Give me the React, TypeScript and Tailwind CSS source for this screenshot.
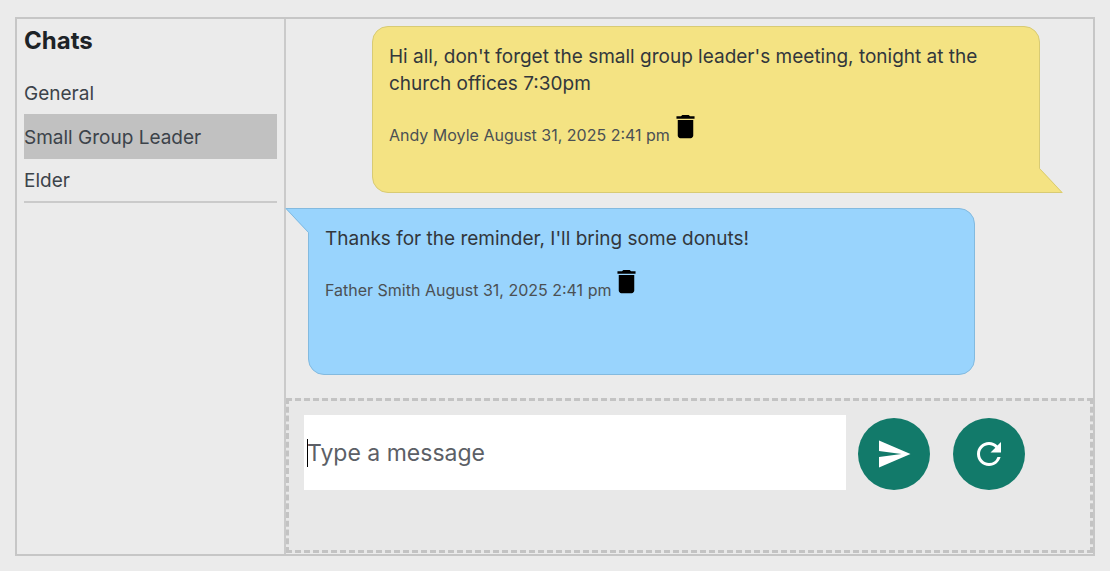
import React from 'react';
import clsx from 'clsx';
import { MdDelete, MdRefresh, MdSend } from 'react-icons/md';

interface Message {
  id: number;
  author: string;
  date: string;
  text: string;
  mine: boolean;
}

const chats = ['General', 'Small Group Leader', 'Elder'];

const messages: Message[] = [
  {
    id: 1,
    author: 'Andy Moyle',
    date: 'August 31, 2025 2:41 pm',
    text: "Hi all, don't forget the small group leader's meeting, tonight at the church offices 7:30pm",
    mine: true
  },
  {
    id: 2,
    author: 'Father Smith',
    date: 'August 31, 2025 2:41 pm',
    text: "Thanks for the reminder, I'll bring some donuts!",
    mine: false
  }
];

const ChatList: React.FC<{ active: string }> = ({ active }) => (
  <aside className="w-[269px] shrink-0 border-r-2 border-[#cacaca] px-[7px] pt-2">
    <h1 className="text-2xl leading-7 font-bold text-[#1d2327]">Chats</h1>
    <ul className="mt-[17px] border-b-2 border-[#cacaca] text-[19px] text-[#3c434a]">
      {chats.map(chat => (
        <li key={chat}>
          <button
            type="button"
            className={clsx(
              'block w-full pt-[3px] text-left',
              chat === active ? 'h-[45px] bg-[#c1c1c1]' : 'h-[42px]'
            )}
          >
            {chat}
          </button>
        </li>
      ))}
    </ul>
  </aside>
);

const Bubble: React.FC<{ message: Message }> = ({ message }) => (
  <article
    className={clsx(
      'relative h-[167px] rounded-2xl border px-4 pt-4 text-[#32373c]',
      message.mine
        ? 'ml-[86px] mr-[53px] rounded-br-none border-[#d8cb74] bg-[#f4e383]'
        : 'ml-[22px] mr-[118px] rounded-tl-none border-[#83badf] bg-[#99d4fd]'
    )}
  >
    {/* Speech tail */}
    {message.mine ? (
      <svg className="absolute -bottom-px left-full h-[26px] w-6" viewBox="0 0 24 26">
        <path d="M-1 26V1H0.5L24 26Z" fill="#f4e383" />
        <path d="M0.5 0V1.5L23 25.5H-1" fill="none" stroke="#d8cb74" />
      </svg>
    ) : (
      <svg className="absolute -top-px right-full h-[26px] w-6" viewBox="0 0 24 26">
        <path d="M25 0V25H23.5L0 0Z" fill="#99d4fd" />
        <path d="M23.5 26V24.5L1 0.5H25" fill="none" stroke="#83badf" />
      </svg>
    )}

    <p className="text-[19px] leading-[27px]">{message.text}</p>
    <div className="mt-[14px] flex items-start text-base text-[#4b5054]">
      <span className="pt-3">
        {message.author} {message.date}
      </span>
      <button type="button" aria-label="Delete message" className="text-black">
        <MdDelete size={31} />
      </button>
    </div>
  </article>
);

const Composer: React.FC = () => (
  <form
    className="mb-px flex h-[155px] items-start border-3 border-dashed border-[#c3c3c3] bg-[#e8e8e8] pt-[14px] pr-[65px] pl-[15px]"
    onSubmit={e => e.preventDefault()}
  >
    <div className="relative mr-3 min-w-0 flex-1">
      <input
        type="text"
        aria-label="Message"
        placeholder="Type a message"
        className="block h-[75px] w-full bg-white px-[3px] text-[23px] text-[#3c434a] caret-transparent outline-none placeholder:text-[#5c5f66]"
      />
      {/* Text cursor */}
      <span className="absolute top-6 left-[3px] h-7 w-px bg-black" />
    </div>
    <div className="mt-[3px] flex gap-[23px] text-white">
      <button
        type="button"
        aria-label="Send"
        className="flex size-[72px] items-center justify-center rounded-full bg-[#127a6a]"
      >
        <MdSend size={36} />
      </button>
      <button
        type="button"
        aria-label="Refresh"
        className="flex size-[72px] items-center justify-center rounded-full bg-[#127a6a]"
      >
        <MdRefresh size={36} />
      </button>
    </div>
  </form>
);

const App: React.FC = () => {
  return (
    <div className="min-h-screen bg-[#ebebeb] px-[15px] py-[17px] font-['Inter',sans-serif]">
      <div className="flex border-2 border-[#c6c6c6]">
        <ChatList active="Small Group Leader" />
        <main className="min-w-0 flex-1">
          <div className="flex flex-col gap-[15px] pt-[7px] pb-[23px]">
            {messages.map(message => (
              <Bubble key={message.id} message={message} />
            ))}
          </div>
          <Composer />
        </main>
      </div>
    </div>
  );
};

export default App;
